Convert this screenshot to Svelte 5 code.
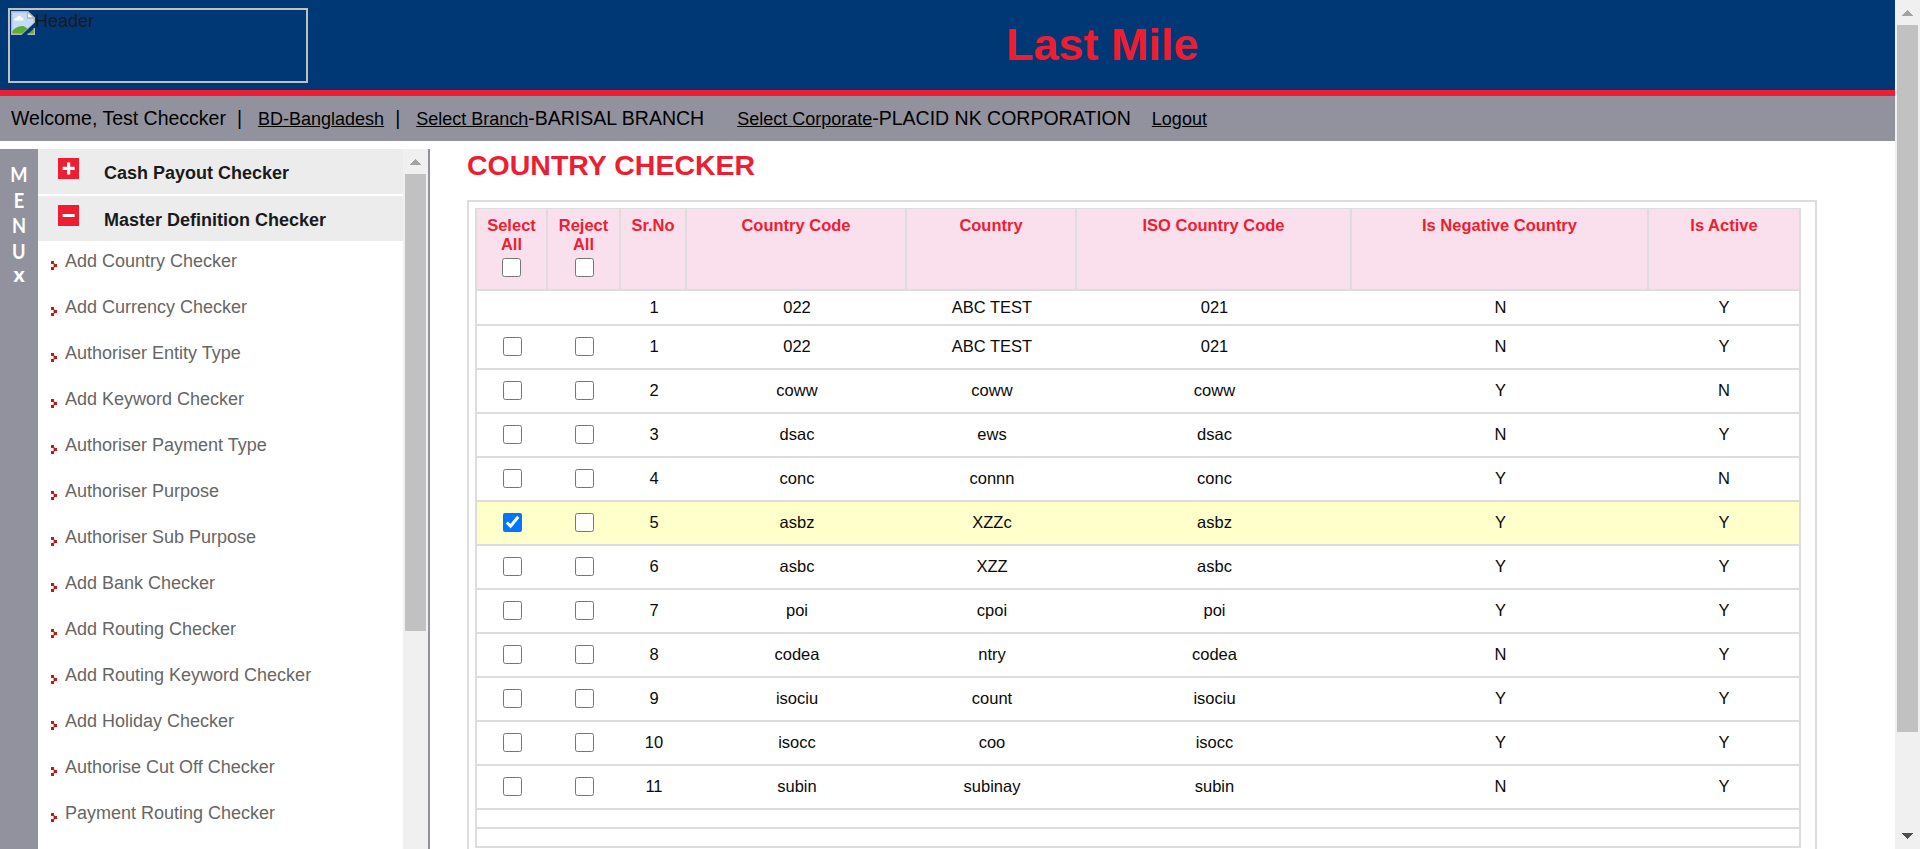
<script>
  const menu = [
    'Add Country Checker', 'Add Currency Checker', 'Authoriser Entity Type', 'Add Keyword Checker',
    'Authoriser Payment Type', 'Authoriser Purpose', 'Authoriser Sub Purpose', 'Add Bank Checker',
    'Add Routing Checker', 'Add Routing Keyword Checker', 'Add Holiday Checker',
    'Authorise Cut Off Checker', 'Payment Routing Checker'
  ];
  const headings = ['Sr.No', 'Country Code', 'Country', 'ISO Country Code', 'Is Negative Country', 'Is Active'];
  const first = ['1', '022', 'ABC TEST', '021', 'N', 'Y'];
  let rows = $state([
    ['1', '022', 'ABC TEST', '021', 'N', 'Y'],
    ['2', 'coww', 'coww', 'coww', 'Y', 'N'],
    ['3', 'dsac', 'ews', 'dsac', 'N', 'Y'],
    ['4', 'conc', 'connn', 'conc', 'Y', 'N'],
    ['5', 'asbz', 'XZZc', 'asbz', 'Y', 'Y'],
    ['6', 'asbc', 'XZZ', 'asbc', 'Y', 'Y'],
    ['7', 'poi', 'cpoi', 'poi', 'Y', 'Y'],
    ['8', 'codea', 'ntry', 'codea', 'N', 'Y'],
    ['9', 'isociu', 'count', 'isociu', 'Y', 'Y'],
    ['10', 'isocc', 'coo', 'isocc', 'Y', 'Y'],
    ['11', 'subin', 'subinay', 'subin', 'N', 'Y']
  ].map((cells) => ({ cells, selected: cells[0] === '5', rejected: false })));
</script>

{#snippet scrollbar(kind)}
  <div class="scroll {kind}">
    <svg width="11" height="6" viewBox="0 0 11 6" shape-rendering="crispEdges"><path d="M5.5 0L11 6H0z" fill="#a3a3a3" /></svg>
    <div class="thumb"></div>
    {#if kind === 'page'}
      <svg class="down" width="11" height="6" viewBox="0 0 11 6" shape-rendering="crispEdges"><path d="M0 0h11L5.5 6z" fill="#505050" /></svg>
    {/if}
  </div>
{/snippet}

<div class="app">
  <div class="page">
    <header>
      <div class="logo">
        <svg width="24" height="24" viewBox="0 0 24 24">
          <path d="M.7.700h16L23.300 7v5L11.500 23.300H.700z" fill="#c6dbf8" stroke="#b4b4b4" stroke-width="1.400" />
          <path d="M3.500 9.500c-.5-2 1-3 2.500-2.500.5-3 4-3 4.500-.5 2 0 2.500 2 1.500 3z" fill="#fff" />
          <path d="M1.400 22.600V20C4 16.500 9 14 13.500 15.500l3 2-5 5.100z" fill="#5aae35" />
          <path d="M16.500.700V7h6.800z" fill="#fff" stroke="#b4b4b4" stroke-width="1.400" />
          <path d="M24 11.500v5L16 24h-5.500z" fill="#003876" />
          <path d="M23.300 17.300v6h-6.500z" fill="#5aae35" />
          <path d="M23.300 17v6.300H16.500" fill="none" stroke="#b4b4b4" stroke-width="1.400" />
        </svg><span>Header</span>
      </div>
      <h1>Last Mile</h1>
    </header>
    <nav>
      <span class="welcome">Welcome, Test Checcker</span><span class="bar">|</span>
      <a class="bd" href="#top">BD-Bangladesh</a><span class="bar">|</span>
      <a class="branch" href="#top">Select Branch</a><span>-BARISAL BRANCH</span>
      <a class="corp" href="#top">Select Corporate</a><span>-PLACID NK CORPORATION</span>
      <a class="logout" href="#top">Logout</a>
    </nav>
    <div class="body">
      <div class="strip"><span>M</span><span>E</span><span>N</span><span>U</span><span class="x">x</span></div>
      <aside>
        <div class="group">
          <svg width="21" height="21"><path fill="#ee1d31" d="M0 0h21v21H0z" /><path fill="#fff" d="M9 4.500h3.200v4.300h4.500v3.200h-4.500v4.500H9V12H4.600V8.800H9z" /></svg>
          <span>Cash Payout Checker</span>
        </div>
        <div class="group">
          <svg width="21" height="21"><path fill="#ee1d31" d="M0 0h21v21H0z" /><path fill="#fff" d="M4.600 9h12v3h-12z" /></svg>
          <span>Master Definition Checker</span>
        </div>
        <ul>
          {#each menu as item}
            <li>
              <svg width="6" height="9" viewBox="0 0 6 9"><path fill="#c01818" d="M0 0h3v3H0zM0 6h3v3H0zM3 3h3v3H3z" /><path fill="#e9a0a0" d="M3 2h1v1H3zM3 6h1v1H3zM2 3h1v3H2z" /></svg>
              <span>{item}</span>
            </li>
          {/each}
        </ul>
      </aside>
      {@render scrollbar('side')}
      <main>
        <h2>COUNTRY CHECKER</h2>
        <div class="frame">
          <div class="grid">
            <div class="row head">
              <div>Select<br />All<input type="checkbox" /></div>
              <div>Reject<br />All<input type="checkbox" class="reject-all" /></div>
              {#each headings as h}<div>{h}</div>{/each}
            </div>
            <div class="row first">
              <div></div><div></div>
              {#each first as c}<div>{c}</div>{/each}
            </div>
            {#each rows as row}
              <div class="row" class:selected={row.selected}>
                <div><input type="checkbox" bind:checked={row.selected} /></div>
                <div><input type="checkbox" bind:checked={row.rejected} /></div>
                {#each row.cells as c}<div>{c}</div>{/each}
              </div>
            {/each}
            <div class="row blank"></div>
            <div class="row blank"></div>
          </div>
        </div>
      </main>
    </div>
  </div>
  {@render scrollbar('page')}
</div>

<style>
  :global(body) { background: #fff; overflow: hidden; }
  .app { display: flex; width: 1920px; height: 849px; overflow: hidden; font: 16.5px "Liberation Sans", Arial, sans-serif; color: #1a1a1a; }
  .page { width: 1895px; display: flex; flex-direction: column; }
  header { height: 90px; flex: none; background: #003876; border-bottom: 6px solid #ee1d31; display: flex; align-items: flex-start; }
  .logo { box-sizing: border-box; width: 300px; height: 75px; margin: 8px 0 0 8px; border: 2px solid #c0c0c0; display: flex; padding: 1px; font-size: 18px; line-height: 21px; }
  h1 { margin: 19px 0 0 698px; font-size: 45px; line-height: 52px; color: #ee1d31; white-space: nowrap; }
  nav { height: 45px; flex: none; background: #92929e; display: flex; align-items: baseline; font-size: 19.5px; line-height: 45px; color: #000; white-space: nowrap; padding-left: 11px; }
  nav a { color: #000; font-size: 18px; }
  .bar { margin-left: 11px; }
  .bd { margin-left: 16px; }
  .branch { margin-left: 16px; }
  .corp { margin-left: 33px; }
  .logout { margin-left: 21px; }
  .body { display: flex; flex: 1; min-height: 0; margin-top: 8px; }
  .strip { width: 38px; background: #92929e; color: #fff; display: flex; flex-direction: column; align-items: center; font: 700 21px/25.5px Lato, sans-serif; padding-top: 12px; box-sizing: border-box; }
  .strip span { transform: scaleX(0.87); height: 25.5px; }
  .strip .x { font-weight: 900; transform: none; margin-top: -2px; }
  aside { width: 365px; }
  .group { height: 45px; background: #ececec; margin-bottom: 2px; display: flex; align-items: flex-start; padding: 9px 0 0 20px; box-sizing: border-box; font-size: 18px; font-weight: bold; }
  .group span { margin: 5px 0 0 25px; line-height: 21px; }
  ul { list-style: none; margin: -2px 0 0; padding: 9px 0 0 13px; }
  li { height: 46px; display: flex; font-size: 18px; line-height: 21px; color: #666; }
  li svg { margin: 11px 8px 0 0; }
  li span { margin-top: 1px; }
  .scroll { width: 25px; flex: none; background: #f0f0f0; display: flex; flex-direction: column; align-items: center; padding-top: 10px; box-sizing: border-box; }
  .scroll svg { flex: none; margin-bottom: 9px; }
  .thumb { width: 21px; background: #c1c1c1; height: 707px; flex: none; }
  .side { width: 27px; border-right: 2px solid #92929e; }
  .side .thumb { height: 457px; }
  .scroll .down { margin-top: 101px; }
  main { padding-left: 37px; }
  h2 { margin: 0; font-size: 28.5px; line-height: 32px; height: 51px; color: #ee1d31; }
  .frame { width: 1350px; height: 680px; box-sizing: border-box; border: 2px solid #ddd; padding: 6px; }
  .grid { width: 1326px; }
  .row { display: grid; grid-template-columns: 71px 73px 66px 220px 170px 275px 297px 150px; height: 42px; border: solid #ddd; border-width: 0 2px 2px; text-align: center; line-height: 19px; color: #0a0a0a; }
  .row > div { box-sizing: border-box; padding-top: 11px; }
  .head { height: 80px; border-top-width: 1px; background: #fae0ec; color: #ee1d31; font-weight: bold; }
  .head > div { padding-top: 7px; border-right: 2px solid #ddd; }
  .head > div:last-child { border-right: 0; }
  .first { height: 33px; }
  .first > div { padding-top: 7px; }
  .blank { height: 17px; }
  .selected { background: #ffffcc; }
  input { display: block; width: 19px; height: 19px; margin: 0 auto; }
  .head input { margin-top: 4px; }
  .head .reject-all { position: relative; left: 1px; }
</style>
